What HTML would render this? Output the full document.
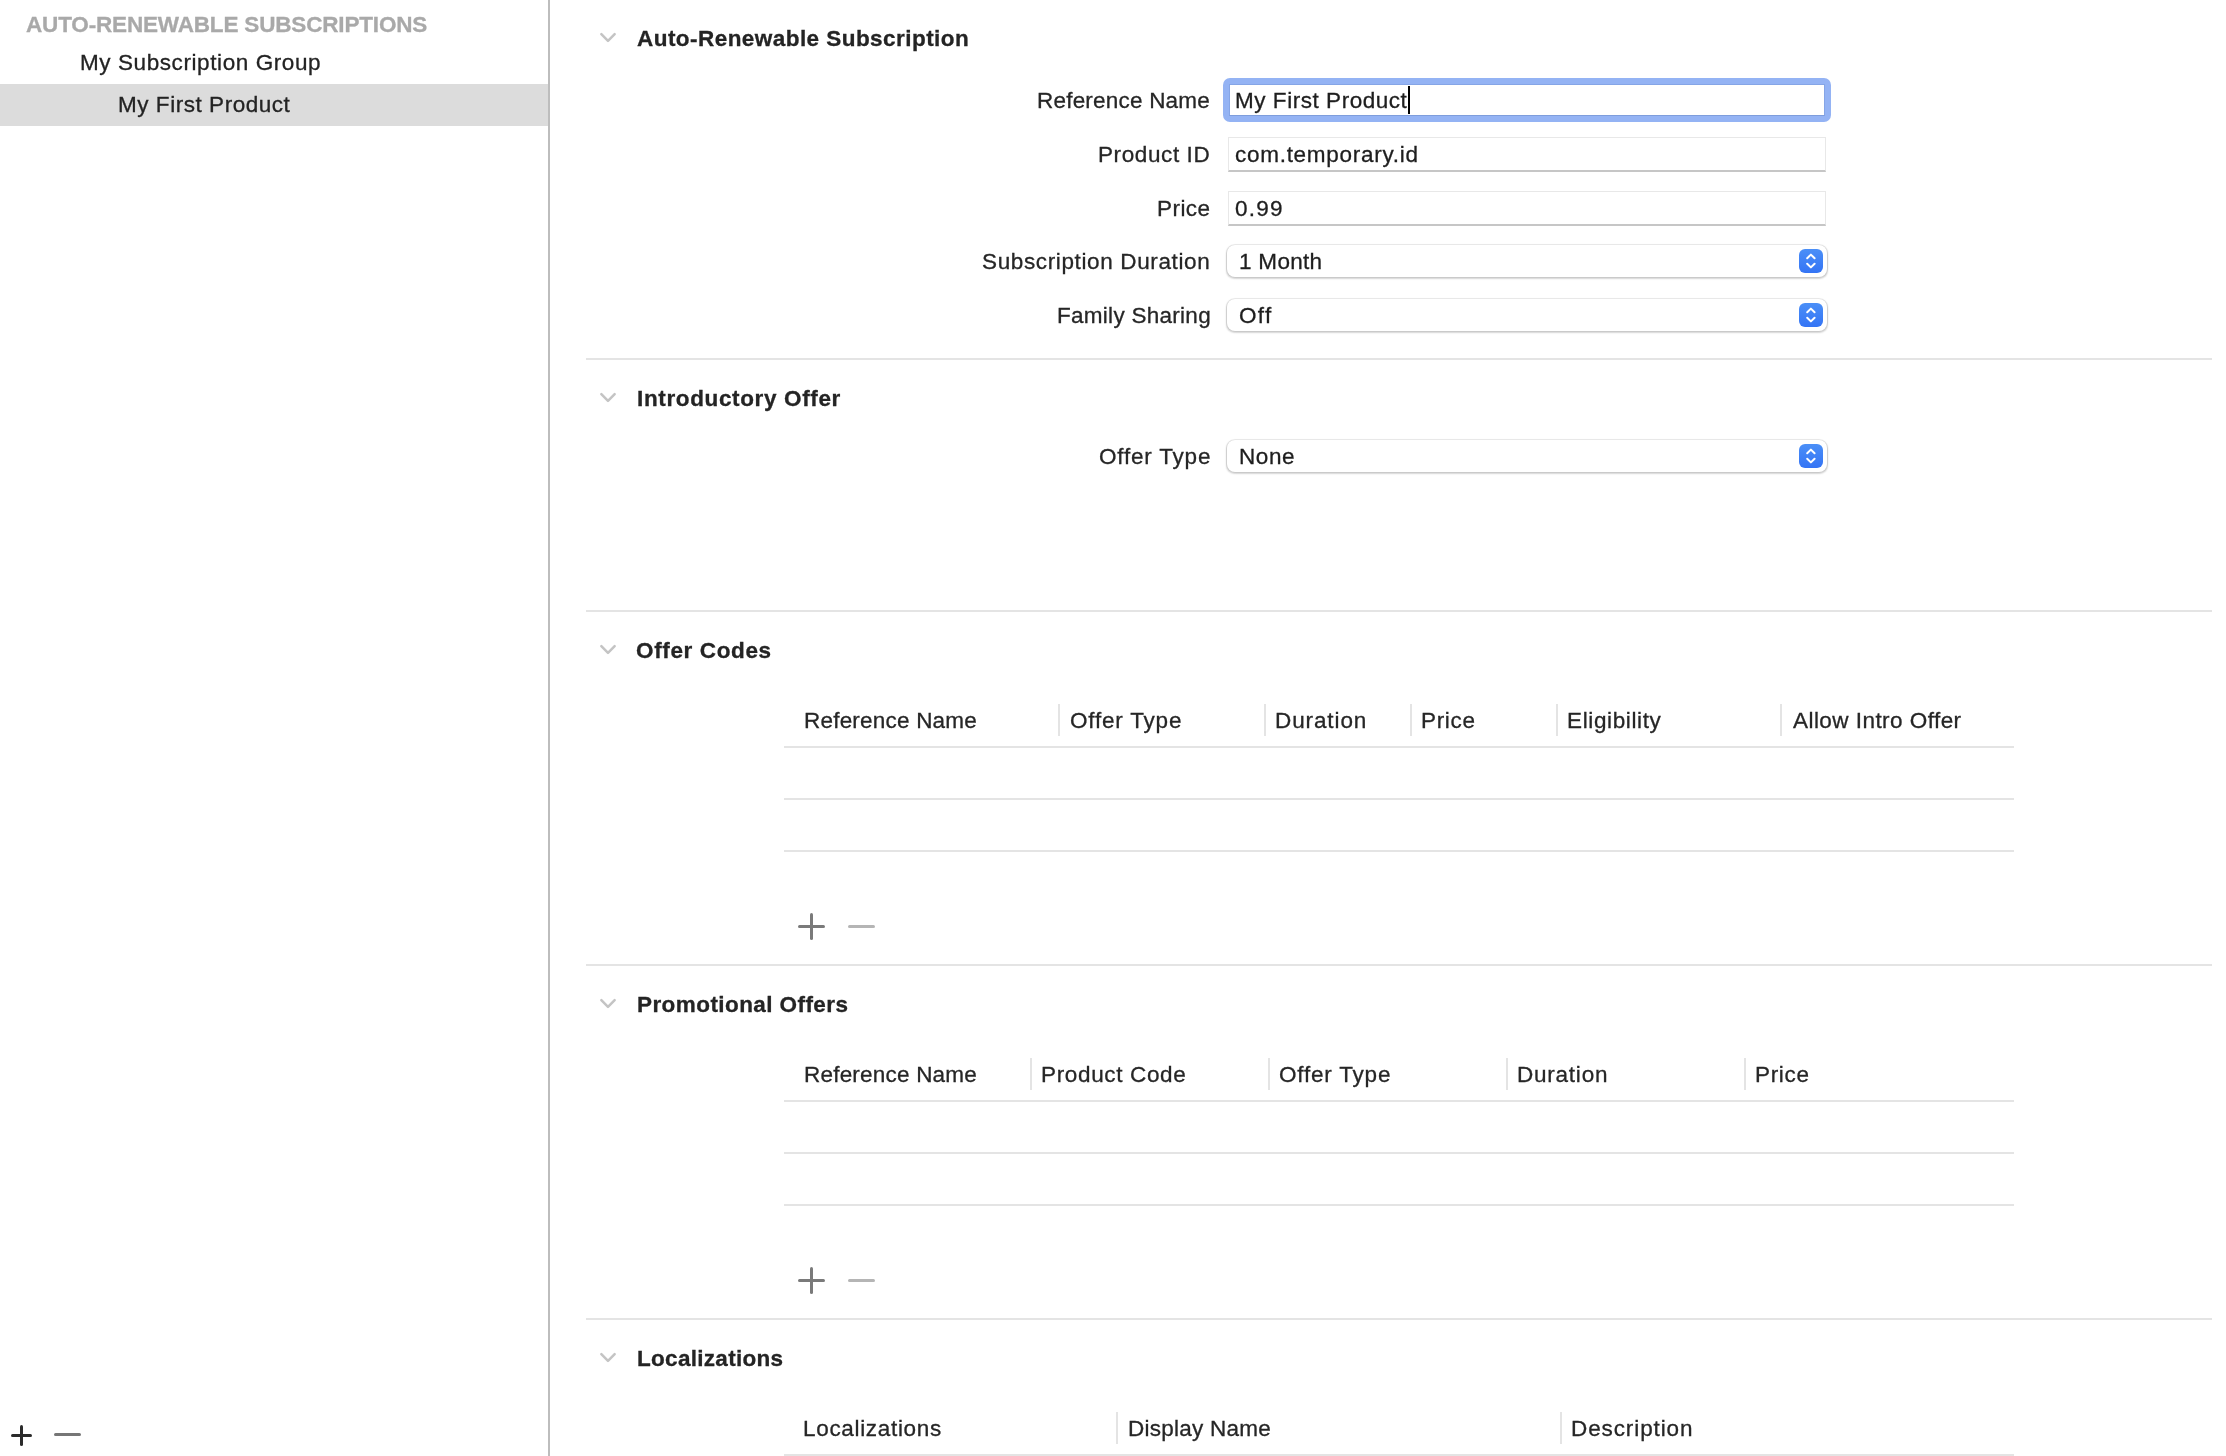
<!DOCTYPE html>
<html><head><meta charset="utf-8"><style>
html,body{margin:0;padding:0;}
body{width:2226px;height:1456px;overflow:hidden;background:#fff;position:relative;font-family:"Liberation Sans",sans-serif;color:#262626;}
.a{position:absolute;white-space:nowrap;line-height:23px;font-size:22.5px;will-change:transform;-webkit-text-stroke:0.3px currentColor;}
.ln{position:absolute;background:#e4e4e4;height:2px;}
.vs{position:absolute;background:#e4e4e4;width:2px;}
.chev{position:absolute;}
.fld{position:absolute;left:1228px;width:598px;height:35px;box-sizing:border-box;background:#fff;border:1px solid #e8e8e8;border-bottom:2px solid #c6c6c6;}
.pop{position:absolute;left:1227px;width:600px;height:33px;box-sizing:border-box;background:#fff;border-radius:8px;box-shadow:0 0 0 1px rgba(0,0,0,0.06),0 1px 1.5px 0.5px rgba(0,0,0,0.16);}
.pbtn{position:absolute;left:572px;top:4px;width:24px;height:24px;border-radius:6px;background:linear-gradient(#4b8ff7,#3474f5);}
.pl{position:absolute;border-radius:1.5px;}
</style></head><body>
<div style="position:absolute;left:548px;top:0;width:2px;height:1456px;background:#bdbdbd;"></div>
<div style="position:absolute;left:0;top:84px;width:548px;height:42px;background:#dcdcdc;"></div>
<svg class="chev" width="20" height="14" style="left:598px;top:31px;"><path d="M3.35 3.15 L10 9.95 L16.65 3.15" fill="none" stroke="#c4c4c4" stroke-width="2.5" stroke-linecap="round" stroke-linejoin="round"/></svg>
<div class="ln" style="left:586px;top:358px;width:1626px;"></div>
<svg class="chev" width="20" height="14" style="left:598px;top:391px;"><path d="M3.35 3.15 L10 9.95 L16.65 3.15" fill="none" stroke="#c4c4c4" stroke-width="2.5" stroke-linecap="round" stroke-linejoin="round"/></svg>
<div class="ln" style="left:586px;top:610px;width:1626px;"></div>
<svg class="chev" width="20" height="14" style="left:598px;top:643px;"><path d="M3.35 3.15 L10 9.95 L16.65 3.15" fill="none" stroke="#c4c4c4" stroke-width="2.5" stroke-linecap="round" stroke-linejoin="round"/></svg>
<div class="ln" style="left:586px;top:964px;width:1626px;"></div>
<svg class="chev" width="20" height="14" style="left:598px;top:997px;"><path d="M3.35 3.15 L10 9.95 L16.65 3.15" fill="none" stroke="#c4c4c4" stroke-width="2.5" stroke-linecap="round" stroke-linejoin="round"/></svg>
<div class="ln" style="left:586px;top:1318px;width:1626px;"></div>
<svg class="chev" width="20" height="14" style="left:598px;top:1351px;"><path d="M3.35 3.15 L10 9.95 L16.65 3.15" fill="none" stroke="#c4c4c4" stroke-width="2.5" stroke-linecap="round" stroke-linejoin="round"/></svg>
<div style="position:absolute;left:1223px;top:78px;width:608px;height:44px;box-sizing:border-box;border-radius:7px;background:#94b3f4;"></div>
<div style="position:absolute;left:1229px;top:84px;width:596px;height:32px;box-sizing:border-box;background:#fff;border:1.5px solid #85a5e6;border-bottom-color:#7e9ddc;"></div>
<div style="position:absolute;left:1408px;top:86px;width:2px;height:28px;background:#000;"></div>
<div class="fld" style="top:137px;"></div>
<div class="fld" style="top:191px;"></div>
<div class="pop" style="top:245px;height:32px;"><div class="pbtn"><svg width="24" height="24" style="position:absolute;left:0;top:0"><path d="M8.2 9.3 L11.9 5.6 L15.6 9.3 M8.2 14.7 L11.9 18.4 L15.6 14.7" fill="none" stroke="#fff" stroke-width="2" stroke-linecap="round" stroke-linejoin="round"/></svg></div></div>
<div class="pop" style="top:299px;height:32px;"><div class="pbtn"><svg width="24" height="24" style="position:absolute;left:0;top:0"><path d="M8.2 9.3 L11.9 5.6 L15.6 9.3 M8.2 14.7 L11.9 18.4 L15.6 14.7" fill="none" stroke="#fff" stroke-width="2" stroke-linecap="round" stroke-linejoin="round"/></svg></div></div>
<div class="pop" style="top:440px;height:32px;"><div class="pbtn"><svg width="24" height="24" style="position:absolute;left:0;top:0"><path d="M8.2 9.3 L11.9 5.6 L15.6 9.3 M8.2 14.7 L11.9 18.4 L15.6 14.7" fill="none" stroke="#fff" stroke-width="2" stroke-linecap="round" stroke-linejoin="round"/></svg></div></div>
<div class="vs" style="left:1058px;top:704px;height:32px;"></div>
<div class="vs" style="left:1264px;top:704px;height:32px;"></div>
<div class="vs" style="left:1410px;top:704px;height:32px;"></div>
<div class="vs" style="left:1556px;top:704px;height:32px;"></div>
<div class="vs" style="left:1780px;top:704px;height:32px;"></div>
<div class="ln" style="left:784px;top:746px;width:1230px;"></div>
<div class="ln" style="left:784px;top:798px;width:1230px;"></div>
<div class="ln" style="left:784px;top:850px;width:1230px;"></div>
<div class="vs" style="left:1030px;top:1058px;height:32px;"></div>
<div class="vs" style="left:1268px;top:1058px;height:32px;"></div>
<div class="vs" style="left:1506px;top:1058px;height:32px;"></div>
<div class="vs" style="left:1744px;top:1058px;height:32px;"></div>
<div class="ln" style="left:784px;top:1100px;width:1230px;"></div>
<div class="ln" style="left:784px;top:1152px;width:1230px;"></div>
<div class="ln" style="left:784px;top:1204px;width:1230px;"></div>
<div class="vs" style="left:1116px;top:1412px;height:32px;"></div>
<div class="vs" style="left:1560px;top:1412px;height:32px;"></div>
<div class="ln" style="left:784px;top:1454px;width:1230px;"></div>
<div class="pl" style="left:797.5px;top:925.25px;width:27.5px;height:2.5px;background:#7a7a7a;"></div><div class="pl" style="left:810px;top:913.0px;width:2.5px;height:27px;background:#7a7a7a;"></div><div class="pl" style="left:848px;top:925.25px;width:27px;height:2.5px;background:#b5b5b5;"></div>
<div class="pl" style="left:797.5px;top:1279.25px;width:27.5px;height:2.5px;background:#7a7a7a;"></div><div class="pl" style="left:810px;top:1267.0px;width:2.5px;height:27px;background:#7a7a7a;"></div><div class="pl" style="left:848px;top:1279.25px;width:27px;height:2.5px;background:#b5b5b5;"></div>
<div class="pl" style="left:11px;top:1434.2px;width:21px;height:2.5px;background:#2b2b2b;"></div><div class="pl" style="left:20.2px;top:1425px;width:2.5px;height:21px;background:#2b2b2b;"></div><div class="pl" style="left:54px;top:1433.3px;width:26.6px;height:2.6px;background:#767676;"></div>
<div class="a" id="side_h" style="left:25.50px;top:13px;letter-spacing:-0.167px;font-weight:bold;color:#a9a9a9;">AUTO-RENEWABLE SUBSCRIPTIONS</div>
<div class="a" id="side_g" style="left:79.70px;top:51px;letter-spacing:0.585px;color:#232323;">My Subscription Group</div>
<div class="a" id="side_p" style="left:117.70px;top:93px;letter-spacing:0.540px;color:#232323;">My First Product</div>
<div class="a" id="h_auto" style="left:636.70px;top:27px;letter-spacing:0.450px;font-weight:bold;color:#242424;">Auto-Renewable Subscription</div>
<div class="a" id="h_intro" style="left:637.00px;top:387px;letter-spacing:0.635px;font-weight:bold;color:#242424;">Introductory Offer</div>
<div class="a" id="h_codes" style="left:635.50px;top:639px;letter-spacing:0.630px;font-weight:bold;color:#242424;">Offer Codes</div>
<div class="a" id="h_promo" style="left:636.50px;top:993px;letter-spacing:0.424px;font-weight:bold;color:#242424;">Promotional Offers</div>
<div class="a" id="h_loc" style="left:636.50px;top:1347px;letter-spacing:0.300px;font-weight:bold;color:#242424;">Localizations</div>
<div class="a" id="l_ref" style="left:1037.00px;top:89px;letter-spacing:0.208px;color:#262626;">Reference Name</div>
<div class="a" id="l_pid" style="left:1098.40px;top:143px;letter-spacing:0.600px;color:#262626;">Product ID</div>
<div class="a" id="l_price" style="left:1156.80px;top:197px;letter-spacing:0.450px;color:#262626;">Price</div>
<div class="a" id="l_dur" style="left:982.40px;top:250px;letter-spacing:0.630px;color:#262626;">Subscription Duration</div>
<div class="a" id="l_fam" style="left:1056.80px;top:304px;letter-spacing:0.277px;color:#262626;">Family Sharing</div>
<div class="a" id="l_otype" style="left:1099.40px;top:445px;letter-spacing:0.800px;color:#262626;">Offer Type</div>
<div class="a" id="v_ref" style="left:1234.50px;top:89px;letter-spacing:0.540px;color:#1e1e1e;">My First Product</div>
<div class="a" id="v_pid" style="left:1234.80px;top:143px;letter-spacing:0.720px;color:#1e1e1e;">com.temporary.id</div>
<div class="a" id="v_price" style="left:1235.10px;top:197px;letter-spacing:1.200px;color:#1e1e1e;">0.99</div>
<div class="a" id="v_dur" style="left:1238.90px;top:250px;letter-spacing:0.300px;color:#1e1e1e;">1 Month</div>
<div class="a" id="v_fam" style="left:1239.00px;top:304px;letter-spacing:1.350px;color:#1e1e1e;">Off</div>
<div class="a" id="v_otype" style="left:1238.70px;top:445px;letter-spacing:0.600px;color:#1e1e1e;">None</div>
<div class="a" id="oc1" style="left:803.50px;top:709px;letter-spacing:0.208px;color:#262626;">Reference Name</div>
<div class="a" id="oc2" style="left:1069.80px;top:709px;letter-spacing:0.800px;color:#262626;">Offer Type</div>
<div class="a" id="oc3" style="left:1274.80px;top:709px;letter-spacing:0.900px;color:#262626;">Duration</div>
<div class="a" id="oc4" style="left:1421.20px;top:709px;letter-spacing:0.675px;color:#262626;">Price</div>
<div class="a" id="oc5" style="left:1567.30px;top:709px;letter-spacing:0.630px;color:#262626;">Eligibility</div>
<div class="a" id="oc6" style="left:1793.40px;top:709px;letter-spacing:0.450px;color:#262626;">Allow Intro Offer</div>
<div class="a" id="po1" style="left:803.50px;top:1063px;letter-spacing:0.208px;color:#262626;">Reference Name</div>
<div class="a" id="po2" style="left:1041.00px;top:1063px;letter-spacing:0.655px;color:#262626;">Product Code</div>
<div class="a" id="po3" style="left:1279.40px;top:1063px;letter-spacing:0.800px;color:#262626;">Offer Type</div>
<div class="a" id="po4" style="left:1517.00px;top:1063px;letter-spacing:0.771px;color:#262626;">Duration</div>
<div class="a" id="po5" style="left:1754.70px;top:1063px;letter-spacing:0.675px;color:#262626;">Price</div>
<div class="a" id="lo1" style="left:802.50px;top:1417px;letter-spacing:0.675px;color:#262626;">Localizations</div>
<div class="a" id="lo2" style="left:1128.00px;top:1417px;letter-spacing:0.245px;color:#262626;">Display Name</div>
<div class="a" id="lo3" style="left:1570.70px;top:1417px;letter-spacing:0.900px;color:#262626;">Description</div>
</body></html>
